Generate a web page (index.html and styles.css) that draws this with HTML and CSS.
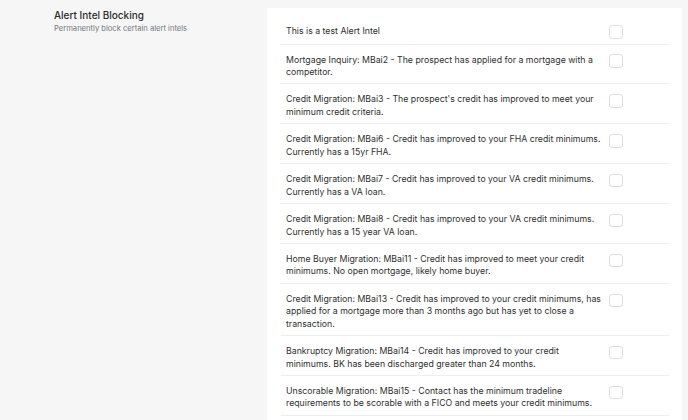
FILE: index.html
```html
<!DOCTYPE html>
<html lang="en">
<head>
<meta charset="utf-8">
<title>Alert Intel Blocking</title>
<link rel="stylesheet" href="styles.css">
</head>
<body>
<div class="page">
  <section class="intro">
    <h2 class="title">Alert Intel Blocking</h2>
    <p class="subtitle">Permanently block certain alert intels</p>
  </section>
  <section class="card">
    <ul class="list">
      <li class="row"><span class="label">This is a test Alert Intel</span><span class="check"></span></li>
      <li class="row"><span class="label">Mortgage Inquiry: MBai2 - The prospect has applied for a mortgage with a competitor.</span><span class="check"></span></li>
      <li class="row"><span class="label">Credit Migration: MBai3 - The prospect's credit has improved to meet your minimum credit criteria.</span><span class="check"></span></li>
      <li class="row"><span class="label">Credit Migration: MBai6 - Credit has improved to your FHA credit minimums. Currently has a 15yr FHA.</span><span class="check"></span></li>
      <li class="row"><span class="label">Credit Migration: MBai7 - Credit has improved to your VA credit minimums. Currently has a VA loan.</span><span class="check"></span></li>
      <li class="row"><span class="label">Credit Migration: MBai8 - Credit has improved to your VA credit minimums. Currently has a 15 year VA loan.</span><span class="check"></span></li>
      <li class="row"><span class="label">Home Buyer Migration: MBai11 - Credit has improved to meet your credit minimums. No open mortgage, likely home buyer.</span><span class="check"></span></li>
      <li class="row"><span class="label">Credit Migration: MBai13 - Credit has improved to your credit minimums, has applied for a mortgage more than 3 months ago but has yet to close a transaction.</span><span class="check"></span></li>
      <li class="row"><span class="label">Bankruptcy Migration: MBai14 - Credit has improved to your credit minimums. BK has been discharged greater than 24 months.</span><span class="check"></span></li>
      <li class="row"><span class="label">Unscorable Migration: MBai15 - Contact has the minimum tradeline requirements to be scorable with a FICO and meets your credit minimums.</span><span class="check"></span></li>
    </ul>
  </section>
</div>
</body>
</html>
```
FILE: styles.css
```css
* { box-sizing: border-box; }
html, body { margin: 0; padding: 0; }
body {
  background: #f6f6f6;
  font-family: Inter, "Noto Sans", sans-serif;
  color: #2f2f2f;
  overflow: hidden;
  height: 420px;
}
.page {
  display: flex;
  align-items: flex-start;
  padding: 7.5px 6.5px 0 54px;
}
.intro {
  width: 213px;
  flex: none;
}
.title {
  margin: 0;
  font-size: 10px;
  line-height: 15px;
  font-weight: 500;
  color: #2a2a2a;
}
.subtitle {
  margin: 1.5px 0 0;
  font-size: 7.6px;
  line-height: 10px;
  color: #737880;
}
.card {
  flex: 1;
  background: #fff;
  padding: 8px 11.5px 0 14px;
  min-height: 420px;
}
.list {
  list-style: none;
  margin: 0;
  padding: 0;
}
.row {
  display: flex;
  align-items: flex-start;
  padding: 9px 0 4.85px 5px;
  border-bottom: 1px solid #eeeeee;
  font-size: 8.75px;
  line-height: 12.5px;
}
.label {
  width: 316px;
  flex: none;
}
.check {
  flex: none;
  width: 14px;
  height: 13.5px;
  margin: 0.8px 0 0 6.5px;
  border: 1px solid #dcdcdc;
  border-radius: 3px;
  background: #fff;
}
```
